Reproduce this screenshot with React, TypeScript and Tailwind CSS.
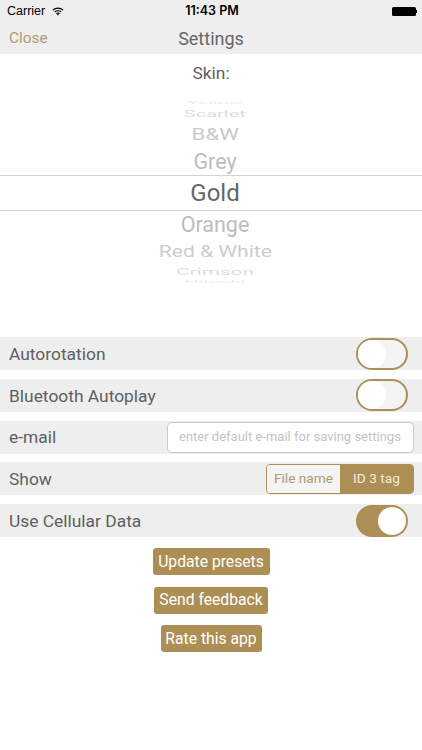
import React from 'react';

const gold = 'bg-[#ad8f56]';

const Toggle = ({ on }: { on?: boolean }) => (
  <div
    className={`mr-[6px] w-[52px] h-[32px] rounded-full border-2 border-[#ad8f56] flex items-center ${
      on ? 'bg-[#ad8f56] justify-end' : 'bg-[#f4f4f4] justify-start'
    }`}
  >
    <div className="w-[28px] h-[28px] rounded-full bg-white" />
  </div>
);

const Row = ({ label, children }: { label: string; children?: React.ReactNode }) => (
  <div className="h-[33px] bg-[#eeeeee] flex items-center justify-between pl-[9px] pr-[8px]">
    <span className="pt-[1px] text-[17.4px] text-[#5f5f5f]">{label}</span>
    {children}
  </div>
);

const wheel = [
  { label: 'Yellow', h: 'h-[10px]', cls: 'text-[16px] text-[#ececec] scale-x-[1.2] scale-y-[0.25]' },
  { label: 'Scarlet', h: 'h-[12px]', cls: 'text-[16px] text-[#dcdcdc] scale-x-[1.25] scale-y-[0.62]' },
  { label: 'B&W', h: 'h-[28px]', cls: 'text-[19px] text-[#c9c9c9] scale-x-[1.17] scale-y-[0.88]' },
  { label: 'Grey', h: 'h-[27px]', cls: 'text-[21.5px] text-[#bdbdbd]' },
];

const wheelBelow = [
  { label: 'Orange', h: 'h-[28px]', cls: 'text-[21.5px] text-[#bdbdbd]' },
  { label: 'Red & White', h: 'h-[26px]', cls: 'text-[18px] text-[#cccccc] scale-x-[1.17] scale-y-[0.88]' },
  { label: 'Crimson', h: 'h-[14px]', cls: 'text-[16px] text-[#dcdcdc] scale-x-[1.3] scale-y-[0.62]' },
  { label: 'Hitachi', h: 'h-[6px]', cls: 'text-[16px] text-[#ececec] scale-x-[1.2] scale-y-[0.25]' },
];

const WheelItem = ({ label, h, cls }: { label: string; h: string; cls: string }) => (
  <div className={`${h} pl-[8px] flex items-center justify-center`}>
    <span className={`block leading-none ${cls}`}>{label}</span>
  </div>
);

const ActionButton = ({ label, w }: { label: string; w: string }) => (
  <button className={`${w} h-[27px] ${gold} rounded-[3px] text-white text-[15.7px] leading-none whitespace-nowrap flex items-center justify-center`}>
    {label}
  </button>
);

export default function App() {
  return (
    <div className="w-[422px] h-[750px] bg-white overflow-hidden font-['Roboto',sans-serif]">
      {/* Status + nav bar */}
      <div className="h-[54px] bg-[#eeeeee]">
        <div className="h-[22px] relative flex items-center justify-between pl-[7px] pr-[5px] text-black">
          <div className="flex items-center gap-[7px] text-[12.5px] font-['Liberation_Sans',sans-serif]">
            <span>Carrier</span>
            <svg width="12" height="9" viewBox="0 0 14 10" fill="none" stroke="#000" strokeWidth="1.5">
              <path d="M1 3.4C4.4 0.4 9.6 0.4 13 3.4" />
              <path d="M3.2 5.6C5.3 3.8 8.7 3.8 10.8 5.6" />
              <path d="M5.2 7.6C6.2 6.8 7.8 6.8 8.8 7.6" />
              <path d="M7 10L5.9 8.6C6.5 8.2 7.5 8.2 8.1 8.6Z" fill="#000" stroke="none" />
            </svg>
          </div>
          <span className="absolute left-0 right-0 text-center text-[12.5px] font-semibold pl-[2px] font-['Inter',sans-serif]">11:43 PM</span>
          <div className="flex items-center">
            <div className="w-[24px] h-[9px] rounded-[1.5px] bg-black" />
            <div className="w-[1.5px] h-[3px] bg-black" />
          </div>
        </div>
        <div className="h-[32px] relative flex items-center pl-[9px]">
          <span className="pt-[1px] text-[15.4px] text-[#b09a70]">Close</span>
          <span className="absolute left-0 right-0 text-center text-[18px] text-[#666666] pt-[1px]">Settings</span>
        </div>
      </div>

      {/* Skin picker */}
      <div className="h-[38px] pt-[1px] flex items-center justify-center text-[17.4px] text-[#5f5f5f]">Skin:</div>
      <div className="pt-[6px] h-[245px]">
        {wheel.map(item => (
          <WheelItem key={item.label} {...item} />
        ))}
        <div className="h-[36px] pl-[8px] border-y border-[#d4d4d4] flex items-center justify-center text-[24px] text-[#666666]">
          Gold
        </div>
        {wheelBelow.map(item => (
          <WheelItem key={item.label} {...item} />
        ))}
      </div>

      {/* Settings rows */}
      <div className="flex flex-col gap-[8.75px]">
        <Row label="Autorotation">
          <Toggle />
        </Row>
        <Row label="Bluetooth Autoplay">
          <Toggle />
        </Row>
        <Row label="e-mail">
          <div className="w-[247px] h-[31px] bg-white border border-[#c9c9c9] rounded-[5px] flex items-center pl-[11px] text-[13px] text-[#c4c4c4] whitespace-nowrap">
            enter default e-mail for saving settings
          </div>
        </Row>
        <Row label="Show">
          <div className="w-[148px] h-[30px] flex rounded-[4px] border border-[#ad8f56] overflow-hidden text-[13.7px]">
            <div className="flex-1 flex items-center justify-center bg-[#f4f4f4] text-[#b09a70]">File name</div>
            <div className={`flex-1 flex items-center justify-center ${gold} text-[#f3ecdf]`}>ID 3 tag</div>
          </div>
        </Row>
        <Row label="Use Cellular Data">
          <Toggle on />
        </Row>
      </div>

      {/* Actions */}
      <div className="mt-[11px] flex flex-col items-center gap-[11.7px]">
        <ActionButton label="Update presets" w="w-[117px]" />
        <ActionButton label="Send feedback" w="w-[114px]" />
        <ActionButton label="Rate this app" w="w-[101px]" />
      </div>
    </div>
  );
}
